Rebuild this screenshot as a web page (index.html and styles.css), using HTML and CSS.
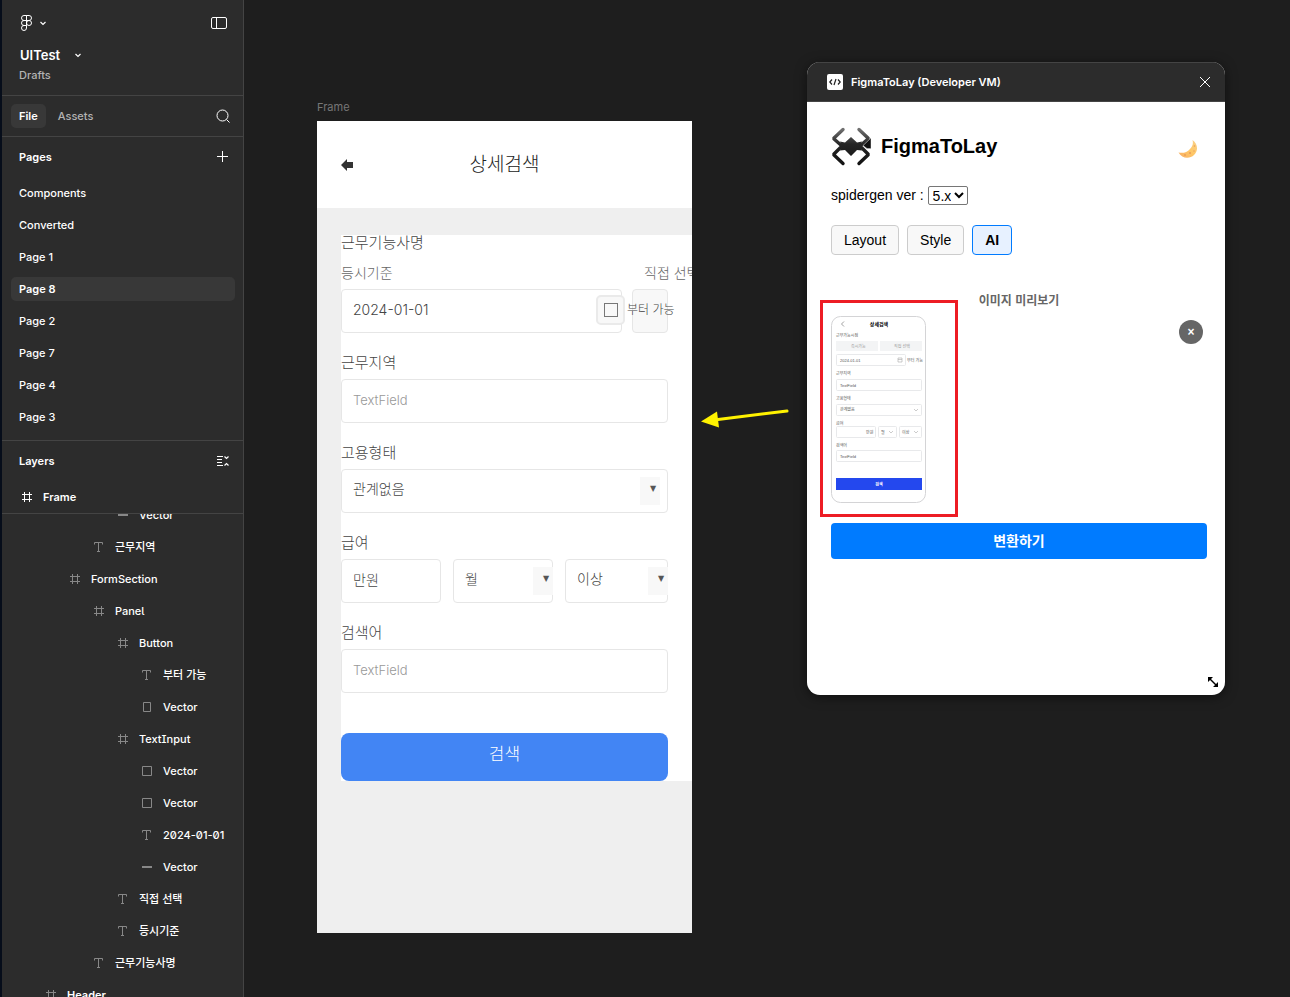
FILE: index.html
```html
<!DOCTYPE html>
<html lang="ko">
<head>
<meta charset="utf-8">
<title>UITest</title>
<link rel="stylesheet" href="styles.css">
</head>
<body>
<svg class="symbols" aria-hidden="true">
  <symbol id="i-frame" viewBox="0 0 12 12"><path d="M3.500 1v10M8.500 1v10M1 3.500h10M1 8.500h10"/></symbol>
  <symbol id="i-text" viewBox="0 0 12 12"><path d="M1.500 3.500v-2h8v2M5.500 1.500v9M4 10.500h3"/></symbol>
  <symbol id="i-box" viewBox="0 0 12 12"><path d="M1.500 1.500h9v9h-9z"/></symbol>
  <symbol id="i-tall" viewBox="0 0 12 12"><path d="M2.500 1.500h7v9h-7z"/></symbol>
  <symbol id="i-line" viewBox="0 0 12 12"><path stroke-width="2" d="M1 6h10"/></symbol>
  <symbol id="i-chev" viewBox="0 0 8 8"><path stroke-width="1.200" d="M1.500 3L4 5.500 6.500 3"/></symbol>
</svg>
<div class="app">
  <aside class="sidebar">
    <header class="file-head">
      <div class="toolbar">
        <button class="icon-btn menu" aria-label="Main menu">
          <svg class="ico" width="14" height="18" viewBox="0 0 14 18"><path d="M7.500 1.500H5a2.500 2.500 0 0 0 0 5h2.500zM7.500 1.500H10a2.500 2.500 0 0 1 0 5H7.500zM7.500 6.500H5a2.500 2.500 0 0 0 0 5h2.500zM10 6.500a2.500 2.500 0 1 1 0 5 2.500 2.500 0 0 1 0-5zM5 11.500h2.500V14A2.500 2.500 0 1 1 5 11.500z"/></svg>
          <svg class="ico" width="8" height="8"><use href="#i-chev"/></svg>
        </button>
        <button class="icon-btn" aria-label="Toggle sidebar">
          <svg class="ico" width="18" height="14" viewBox="0 0 18 14"><rect x="1.500" y="1.500" width="15" height="11" rx="1.500"/><path d="M6.500 1.500v11"/></svg>
        </button>
      </div>
      <button class="file-name">UITest <svg class="ico" width="8" height="8"><use href="#i-chev"/></svg></button>
      <span class="drafts">Drafts</span>
    </header>
    <nav class="tabs">
      <button class="tab active">File</button>
      <button class="tab">Assets</button>
      <button class="icon-btn push" aria-label="Search"><svg class="ico" width="16" height="16" viewBox="0 0 16 16"><circle cx="7.500" cy="7.500" r="5.500"/><path d="M11.500 11.500l3 3"/></svg></button>
    </nav>
    <section class="pages">
      <div class="panel-head"><h2>Pages</h2><button class="icon-btn push" aria-label="Add page"><svg class="ico" width="14" height="14" viewBox="0 0 14 14"><path d="M6.500 1v11M1 6.500h11"/></svg></button></div>
      <ul class="page-list">
        <li><a href="#">Components</a></li>
        <li><a href="#">Converted</a></li>
        <li><a href="#">Page 1</a></li>
        <li><a href="#" class="current">Page 8</a></li>
        <li><a href="#">Page 2</a></li>
        <li><a href="#">Page 7</a></li>
        <li><a href="#">Page 4</a></li>
        <li><a href="#">Page 3</a></li>
      </ul>
    </section>
    <section class="layers-head">
      <div class="panel-head"><h2>Layers</h2><button class="icon-btn push" aria-label="Collapse layers"><svg class="ico" width="14" height="12" viewBox="0 0 14 12"><path d="M1 1.500h6M1 4.500h5M1 7.500h5M1 10.500h6"/><path stroke-width="1.200" d="M8.500 1.500l2 2 2-2M8.500 10.500l2-2 2 2"/></svg></button></div>
      <div class="layer d0"><svg class="ico" width="12" height="12"><use href="#i-frame"/></svg>Frame</div>
    </section>
    <div class="tree-wrap">
      <ul class="tree">
        <li class="layer d4"><svg class="ico" width="12" height="12"><use href="#i-line"/></svg>Vector</li>
        <li class="layer d3"><svg class="ico" width="12" height="12"><use href="#i-text"/></svg>근무지역</li>
        <li class="layer d2"><svg class="ico" width="12" height="12"><use href="#i-frame"/></svg>FormSection</li>
        <li class="layer d3"><svg class="ico" width="12" height="12"><use href="#i-frame"/></svg>Panel</li>
        <li class="layer d4"><svg class="ico" width="12" height="12"><use href="#i-frame"/></svg>Button</li>
        <li class="layer d5"><svg class="ico" width="12" height="12"><use href="#i-text"/></svg>부터 가능</li>
        <li class="layer d5"><svg class="ico" width="12" height="12"><use href="#i-tall"/></svg>Vector</li>
        <li class="layer d4"><svg class="ico" width="12" height="12"><use href="#i-frame"/></svg>TextInput</li>
        <li class="layer d5"><svg class="ico" width="12" height="12"><use href="#i-box"/></svg>Vector</li>
        <li class="layer d5"><svg class="ico" width="12" height="12"><use href="#i-box"/></svg>Vector</li>
        <li class="layer d5"><svg class="ico" width="12" height="12"><use href="#i-text"/></svg>2024-01-01</li>
        <li class="layer d5"><svg class="ico" width="12" height="12"><use href="#i-line"/></svg>Vector</li>
        <li class="layer d4"><svg class="ico" width="12" height="12"><use href="#i-text"/></svg>직접 선택</li>
        <li class="layer d4"><svg class="ico" width="12" height="12"><use href="#i-text"/></svg>등시기준</li>
        <li class="layer d3"><svg class="ico" width="12" height="12"><use href="#i-text"/></svg>근무기능사명</li>
        <li class="layer d1"><svg class="ico" width="12" height="12"><use href="#i-frame"/></svg>Header</li>
      </ul>
    </div>
  </aside>

  <main class="canvas">
    <div class="board-node">
      <span class="board-label">Frame</span>
      <div class="board">
        <header class="board-head">
          <button class="back" aria-label="Back"><svg width="12" height="12" viewBox="0 0 12 12"><path fill="#333" d="M0 6L6 0v3h6v6H6v3z"/></svg></button>
          <h1>상세검색</h1>
        </header>
        <form class="form">
          <div class="group">
            <label class="label" for="date">근무기능사명</label>
            <div class="modes"><span>등시기준</span><span>직접 선택</span></div>
            <div class="date-row">
              <input class="field date" id="date" value="2024-01-01">
              <span class="slot"></span>
              <label class="check"><span class="check-box"><input type="checkbox"></span>부터 가능</label>
            </div>
          </div>
          <div class="group">
            <label class="label" for="area">근무지역</label>
            <input class="field" id="area" placeholder="TextField">
          </div>
          <div class="group">
            <label class="label" for="kind">고용형태</label>
            <div class="pick inset"><select class="field" id="kind"><option>관계없음</option></select><span class="arrow">▼</span></div>
          </div>
          <div class="group">
            <label class="label" for="pay">급여</label>
            <div class="pay-row">
              <input class="field" id="pay" value="만원">
              <div class="pick"><select class="field" aria-label="기간"><option>월</option></select><span class="arrow">▼</span></div>
              <div class="pick"><select class="field" aria-label="범위"><option>이상</option></select><span class="arrow">▼</span></div>
            </div>
          </div>
          <div class="group">
            <label class="label" for="word">검색어</label>
            <input class="field" id="word" placeholder="TextField">
          </div>
          <button class="submit" type="button">검색</button>
        </form>
      </div>
    </div>

    <svg class="pointer" width="90" height="22" viewBox="0 0 90 22"><path d="M87 5L18 13.500" stroke="#fff200" stroke-width="3" stroke-linecap="round"/><path d="M1 15.500L17 5.500l2 16z" fill="#fff200"/></svg>

    <section class="plugin">
      <header class="plugin-bar">
        <svg width="16" height="16" viewBox="0 0 16 16"><rect width="16" height="16" rx="2" fill="#fff"/><path d="M5 5.500L2.800 8 5 10.500M11 5.500L13.200 8 11 10.500M9 5l-2 6" fill="none" stroke="#222" stroke-width="1.200"/></svg>
        <h2>FigmaToLay (Developer VM)</h2>
        <button class="icon-btn push" aria-label="Close"><svg class="ico" width="12" height="12" viewBox="0 0 12 12"><path d="M1 1l10 10M11 1L1 11"/></svg></button>
      </header>
      <div class="plugin-body">
        <div class="brand">
          <svg width="40" height="40" viewBox="0 0 40 40">
            <defs><linearGradient id="spider" gradientUnits="userSpaceOnUse" x1="0" y1="0" x2="0" y2="40"><stop offset="0" stop-color="#808080"/><stop offset=".45" stop-color="#262626"/><stop offset="1" stop-color="#111"/></linearGradient></defs>
            <g fill="none" stroke="url(#spider)" stroke-width="3.400" stroke-linecap="round" stroke-linejoin="bevel"><path d="M12 3.500L2.500 12.500l8.500 7.500-8.500 8.500 9.500 9M28 3.500l9.500 9-8.500 7.500 8.500 8.500-9.500 9"/></g>
            <path d="M20 11l6 5.500 5-1-2 5 2 4-5-.5-6 6-6-6-5 .5 2-4-2-5 5 1z" fill="url(#spider)"/>
            <path d="M32 19.500l8-7.500v10.500h-4z" fill="#111" stroke="#bbb" stroke-width=".6"/>
          </svg>
          <h1>FigmaToLay</h1>
          <button class="moon push" aria-label="Dark mode"><svg width="20" height="20" viewBox="0 0 20 20"><defs><linearGradient id="moon" x1="0" y1="1" x2="1" y2="0"><stop offset="0" stop-color="#f7ad63"/><stop offset=".5" stop-color="#ffc766"/><stop offset="1" stop-color="#f8d28c"/></linearGradient></defs><path d="M14.500 1c5.500 4 6 11 1.500 15-4 4-12 4-15.500-2.500 4.500 1 8.500 0 11.500-3.500 2.500-3 3.500-5 2.500-9z" fill="url(#moon)"/><g fill="#e99b57"><circle cx="7" cy="16" r=".9"/><circle cx="12" cy="14" r="1"/><circle cx="16" cy="12" r=".7"/><circle cx="16.500" cy="7" r=".8"/></g></svg></button>
        </div>
        <div class="version"><label for="ver">spidergen ver :</label><select id="ver"><option>5.x</option></select></div>
        <div class="modes-bar">
          <button class="mode">Layout</button><button class="mode">Style</button><button class="mode on">AI</button>
        </div>
        <h3 class="preview-title">이미지 미리보기</h3>
        <div class="preview">
          <svg width="95" height="187" viewBox="0 0 95 187">
            <rect x=".5" y=".5" width="94" height="186" rx="9" fill="#fff" stroke="#d4d4d6"/>
            <path d="M13 5.500l-2.500 2.500 2.500 2.500" fill="none" stroke="#777" stroke-width=".7"/>
            <g fill="#f3f4f5"><path d="M5 25h42v10H5zM49 25h42v10H49z"/></g>
            <g fill="#fff" stroke="#e2e3e6" stroke-width=".8"><rect x="5.500" y="38.500" width="69" height="11" rx="1"/><rect x="5.500" y="63.500" width="85" height="11" rx="1"/><rect x="5.500" y="88.500" width="85" height="11" rx="1"/><rect x="5.500" y="110.500" width="39" height="11" rx="1"/><rect x="47.500" y="110.500" width="18" height="11" rx="1"/><rect x="68.500" y="110.500" width="22" height="11" rx="1"/><rect x="5.500" y="134.500" width="85" height="11" rx="1"/></g>
            <g fill="none" stroke="#aaa" stroke-width=".6"><path d="M67 42h4v4h-4zM67 43.500h4M83 93l2 2 2-2M58 115l2 2 2-2M83 115l2 2 2-2"/></g>
            <path d="M5 162h86v12H5z" fill="#2448ee"/>
            <g class="mini">
              <text x="5" y="21">근무가능시점</text><text x="20" y="31.500" fill="#999">즉시가능</text><text x="63" y="31.500" fill="#999">직접 선택</text>
              <text x="9" y="45.500">2024-01-01</text><text x="76" y="45.500">부터 가능</text>
              <text x="5" y="59">근무지역</text><text x="9" y="70.500">TextField</text>
              <text x="5" y="84">고용형태</text><text x="9" y="95">관계없음</text>
              <text x="5" y="109">급여</text><text x="35" y="117.500">만원</text><text x="50" y="117.500">월</text><text x="71" y="117.500">이상</text>
              <text x="5" y="130.500">검색어</text><text x="9" y="141.500">TextField</text>
            </g>
            <text class="mini-title" x="48" y="9.500">상세검색</text><text class="mini-go" x="48" y="169.500">검색</text>
          </svg>
          <span class="highlight"></span>
          <button class="clear" aria-label="Remove">×</button>
        </div>
        <button class="convert">변환하기</button>
      </div>
      <svg class="grip" width="12" height="12" viewBox="0 0 12 12"><path d="M1 1h5L1 6zM11 11H6l5-5z"/><path d="M2 2l8 8" stroke="#000" stroke-width="1.500"/></svg>
    </section>
  </main>
</div>
</body>
</html>
```
FILE: styles.css
```css
* { box-sizing: border-box; }
body { margin: 0; background: #1e1e1e; font: 500 11px/16px Inter, "Noto Sans CJK KR", sans-serif; }
h1, h2, h3, ul { margin: 0; padding: 0; list-style: none; }
button, input, select { font: inherit; color: inherit; margin: 0; }
button { padding: 0; border: 0; background: none; }
a { color: inherit; text-decoration: none; }
svg { display: block; flex: none; }
.symbols { position: absolute; width: 0; height: 0; }
.ico { fill: none; stroke: currentColor; }
.push { margin-left: auto; }

.app { display: flex; height: 100vh; overflow: hidden; }

/* Sidebar */
.sidebar { display: flex; flex-direction: column; flex: none; width: 244px; color: #fff; background: #2c2c2c; border-left: 2px solid #060d1a; border-right: 1px solid #444; }
.icon-btn { display: flex; align-items: center; }
.file-head { display: flex; flex-direction: column; align-items: flex-start; height: 96px; padding: 14px 15px 0 17px; border-bottom: 1px solid #444; }
.toolbar { display: flex; justify-content: space-between; width: 100%; height: 18px; }
.menu { gap: 6px; }
.file-name { display: flex; align-items: center; gap: 14px; margin-top: 14px; font-size: 13px; font-weight: 600; line-height: 18px; margin-left: 1px; }
.drafts { margin-top: 3px; color: #b3b3b3; }
.tabs { display: flex; align-items: center; gap: 4px; height: 41px; padding: 0 12px 0 9px; border-bottom: 1px solid #444; }
.tab { height: 24px; padding: 0 8px; border-radius: 5px; color: #b3b3b3; }
.tab.active { color: #fff; background: #383838; font-weight: 600; }
.pages { flex: none; height: 304px; border-bottom: 1px solid #444; }
.panel-head { display: flex; align-items: center; height: 40px; padding: 0 13px 0 17px; }
.panel-head h2 { font-size: 11px; font-weight: 600; }
.page-list { display: flex; flex-direction: column; gap: 8px; padding: 4px 8px 0 9px; }
.page-list a { display: block; padding: 4px 8px; border-radius: 5px; }
.page-list .current { background: #383838; font-weight: 600; }
.layers-head { flex: none; border-bottom: 1px solid #444; }
.layer { display: flex; align-items: center; gap: 10px; height: 32px; }
.layer.d0 { padding-left: 19px; font-weight: 600; }
.tree-wrap { flex: 1; min-height: 0; overflow: hidden; }
.tree { margin-top: -15px; font-feature-settings: "ss02", "zero"; }
.tree .ico { color: #888; }
.d1 { padding-left: 43px; font-weight: 600; }
.d2 { padding-left: 67px; }
.d3 { padding-left: 91px; }
.d4 { padding-left: 115px; }
.d5 { padding-left: 139px; }

/* Canvas */
.canvas { position: relative; flex: 1; min-width: 0; overflow: hidden; }
.board-node { position: absolute; left: 73px; top: 99px; width: 375px; }
.board-label { display: block; height: 22px; color: #777; font-weight: 400; }
.board { min-height: 812px; overflow: hidden; background: #efefef; color: #444; font: 300 14px/16px Inter, "Noto Sans CJK KR", sans-serif; }
.board-head { display: grid; grid-template-columns: 24px 1fr 24px; align-items: center; height: 87px; padding: 0 24px; background: #fff; }
.board-head h1 { text-align: center; font-size: 19px; font-weight: 300; color: #222; }
.form { margin: 27px 0 0 24px; padding-right: 24px; display: flex; flex-direction: column; gap: 22px; background: #fff; }
.group { display: flex; flex-direction: column; gap: 8px; }
.label { font-size: 15px; line-height: 16px; }
.modes { display: flex; justify-content: space-between; margin: 6px -24px 0 0; white-space: nowrap; color: #666; }
.modes span:last-child { width: 48px; }
.field { width: 100%; height: 44px; padding: 0 11px 4px; border: 1px solid #e6e6e6; border-radius: 4px; background: #fff; appearance: none; }
.field::placeholder { color: #999; opacity: 1; font-size: 13px; }
.date-row { position: relative; display: flex; justify-content: space-between; }
.date { width: 281px; }
.slot { width: 36px; border: 1px solid #e6e6e6; border-radius: 4px; background: #f8f8f8; }
.check { position: absolute; left: 255px; top: 6px; display: flex; align-items: center; gap: 2px; white-space: nowrap; font-size: 12px; }
.check-box { display: grid; place-items: center; width: 29px; height: 30px; border: 2px solid #eaeaea; border-radius: 5px; background: #f8f8f8; }
.check input { width: 14px; height: 14px; margin: 0; appearance: none; border: 1px solid #777; }
.pick { position: relative; }
.arrow { position: absolute; right: 0; top: 8px; width: 20px; height: 28px; padding-left: 6px; background: #f8f8f8; color: #555; font: 8px/24px "DejaVu Sans", sans-serif; text-align: center; pointer-events: none; }
.inset .arrow { right: 8px; }
.pay-row { display: grid; grid-template-columns: 100fr 100fr 103fr; gap: 12px; }
.submit { height: 48px; margin-top: 18px; padding-bottom: 6px; border-radius: 8px; background: #4285f4; color: #fff; font-size: 17px; }

.pointer { position: absolute; left: 456px; top: 406px; }

/* Plugin window */
.plugin { position: absolute; left: 563px; top: 62px; width: 418px; min-height: 633px; border-radius: 13px; overflow: hidden; background: #fff; color: #000; box-shadow: 0 2px 12px rgba(0,0,0,.5); }
.plugin-bar { display: flex; align-items: center; gap: 8px; height: 40px; padding: 0 14px 0 20px; border-top: 1px solid #444; border-bottom: 1px solid #444; background: #2c2c2c; color: #fff; }
.plugin-bar h2 { font-size: 11px; font-weight: 600; }
.plugin-body { display: flex; flex-direction: column; padding: 24px 18px 24px 24px; font: 14px/18px "Liberation Sans", "Noto Sans CJK KR", sans-serif; }
.brand { display: flex; align-items: center; gap: 10px; height: 40px; }
.brand h1 { font-size: 20px; line-height: 24px; }
.moon { margin-right: 9px; padding-top: 6px; }
.version { display: flex; align-items: center; gap: 4px; height: 20px; margin-top: 19px; }
.version select { width: 40px; height: 19px; padding: 0; border: 1px solid #767676; border-radius: 2px; background: #fff; }
.modes-bar { display: flex; gap: 8px; margin-top: 20px; }
.mode { height: 30px; padding: 0 12px; border: 1px solid #ccc; border-radius: 4px; background: #f8f8f8; }
.mode.on { border-color: #007bff; background: #e7f1ff; font-weight: 700; }
.preview-title { margin-top: 37px; text-align: center; font-size: 12px; color: #666; }
.preview { position: relative; margin-top: 6px; }
.highlight { position: absolute; left: -11px; top: -16px; width: 138px; height: 217px; border: 3px solid #ed1c24; }
.clear { position: absolute; right: 4px; top: 4px; width: 24px; height: 24px; border-radius: 50%; background: #666; color: #fff; font-size: 12px; font-weight: 700; line-height: 24px; }
.convert { height: 36px; margin-top: 20px; border-radius: 4px; background: #007bff; color: #fff; font-weight: 700; }
.mini { font-size: 4px; fill: #555; }
.mini-title, .mini-go { font-size: 5px; font-weight: 700; text-anchor: middle; }
.mini-go { font-size: 4px; fill: #fff; }
.grip { position: absolute; right: 6px; bottom: 7px; }
```
